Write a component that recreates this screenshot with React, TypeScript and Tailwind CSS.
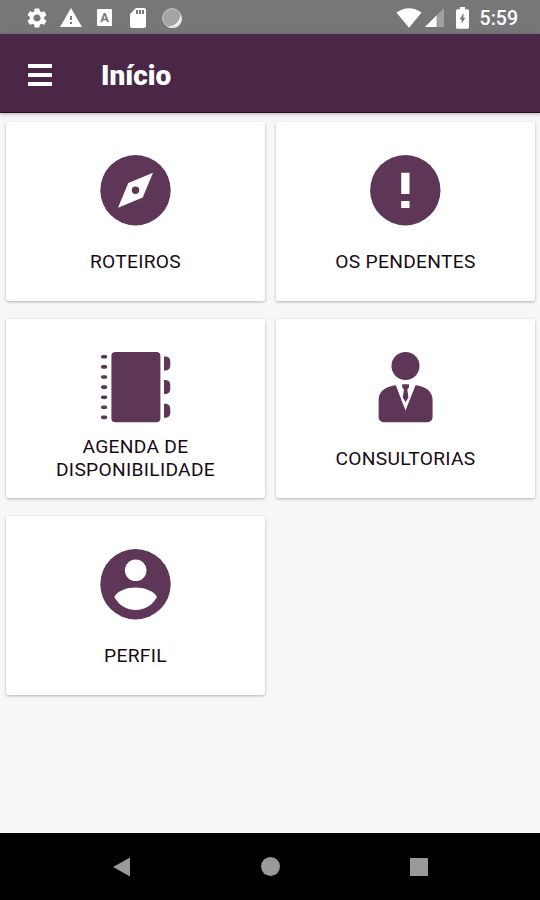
import React from "react";
import { MdSettings, MdWarning, MdSdCard } from "react-icons/md";

function CompassIcon() {
  return (
    <svg className="w-[71px] h-[71px]" viewBox="0 0 71 71" fill="#5d3658">
      <circle cx="35.5" cy="35.2" r="35.2" />
      <path d="M53 17.7L42.7 42.4L18 52.7L28.3 28Z" fill="#fff" />
      <circle cx="35.5" cy="35.2" r="3.7" />
    </svg>
  );
}

function AlertIcon() {
  return (
    <svg className="w-[71px] h-[71px]" viewBox="0 0 71 71" fill="#5d3658">
      <circle cx="35.3" cy="35.2" r="35.2" />
      <path d="M31.2 17.7h8.3v21.3h-8.3zM31.2 46h8.3v7h-8.3z" fill="#fff" />
    </svg>
  );
}

function AgendaIcon() {
  return (
    <svg className="w-[71px] h-[71px]" viewBox="0 0 71 71" fill="#5d3658">
      <rect x="11.4" y="0" width="49" height="70.3" rx="4" />
      {[0, 1, 2, 3, 4, 5, 6].map((i) => (
        <rect key={i} x="1" y={3 + i * 10.1} width="6.2" height="3.6" rx="1.7" />
      ))}
      {[4.4, 28, 51.8].map((y) => (
        <path key={y} transform={`translate(64 ${y})`} d="M0 0h2.4Q6.3 1.2 6.3 5v4Q6.3 13 2.4 14H0Z" />
      ))}
    </svg>
  );
}

function ConsultantIcon() {
  return (
    <svg className="w-[71px] h-[71px]" viewBox="0 0 71 71" fill="#5d3658">
      <circle cx="35.5" cy="14" r="14" />
      <path d="M25.8 33.2L35.5 58.5L45.5 33.2C55 34.4 62.6 38.6 62.6 48v17.3a5 5 0 0 1-5 5H13.6a5 5 0 0 1-5-5V48C8.6 38.6 16.5 34.4 25.8 33.2Z" />
      <path d="M32.2 32.2h6.8v3l-1.7 2.2 1.1 8.2-2.8 4.6-2.8-4.6 1.1-8.2-1.7-2.2z" />
    </svg>
  );
}

function ProfileIcon() {
  return (
    <svg className="w-[71px] h-[71px]" viewBox="0 0 71 71" fill="#5d3658">
      <circle cx="35.5" cy="35.2" r="35.2" />
      <circle cx="35.7" cy="21.3" r="10.8" fill="#fff" />
      <path d="M14.3 48C17.5 41.7 27 38.5 35.5 38.5S53.7 41.7 57 48C52.5 56 45 61 35.6 61S18.8 56 14.3 48Z" fill="#fff" />
    </svg>
  );
}

const items = [
  { label: "ROTEIROS", icon: CompassIcon },
  { label: "OS PENDENTES", icon: AlertIcon },
  { label: "AGENDA DE DISPONIBILIDADE", icon: AgendaIcon },
  { label: "CONSULTORIAS", icon: ConsultantIcon },
  { label: "PERFIL", icon: ProfileIcon },
];

function StatusBar() {
  return (
    <div className="flex h-[34px] items-center justify-between bg-[#777777] pt-px pl-[25px] pr-[22px] text-white">
      <div className="flex items-center">
        <MdSettings className="h-6 w-6" />
        <MdWarning className="ml-[10px] h-6 w-6" />
        <div className="ml-[14px] flex h-[17px] w-[15px] items-center justify-center rounded-[1px] bg-white text-[13px] leading-none font-bold text-[#777777]">
          A
        </div>
        <MdSdCard className="ml-[14px] h-6 w-6" />
        <svg className="ml-[12px] h-5 w-5" viewBox="0 0 20 20">
          <circle cx="10" cy="10" r="9.8" fill="#a4a4a4" />
          <path d="M18.6 6A9.3 9.3 0 0 1 5 18.2Q11 19 14.8 15T18.6 6Z" fill="#fff" />
          <circle cx="10" cy="10" r="9.3" fill="none" stroke="#c4c4c4" />
        </svg>
      </div>
      <div className="flex items-center">
        <svg className="h-5 w-[26px]" viewBox="0 0 26 20" fill="#fff">
          <path d="M0.4 4.6Q13-4.2 25.6 4.6L13 19.8Z" />
        </svg>
        <svg className="ml-[3px] h-[19px] w-[19px]" viewBox="0 0 19 19">
          <path d="M19 0V19H0Z" fill="#a0a0a0" />
          <path d="M11.5 7.5V19H0Z" fill="#fff" />
        </svg>
        <svg className="ml-[12px] h-[22px] w-[13px]" viewBox="0 0 13 22">
          <path d="M4 0h5v2.3h2.5A1.5 1.5 0 0 1 13 3.8v16.4a1.5 1.5 0 0 1-1.5 1.5h-10A1.5 1.5 0 0 1 0 20.2V3.8A1.5 1.5 0 0 1 1.5 2.3H4Z" fill="#fff" />
          <path d="M7.4 6V10.8H9.3L5.7 16.8V12.6H3.7Z" fill="#777" />
        </svg>
        <span className="ml-[11px] pt-[2px] text-[19.5px] leading-none font-medium">5:59</span>
      </div>
    </div>
  );
}

function Header() {
  return (
    <div className="flex h-[79px] items-center border-b border-[#2c0a2b] bg-[#4a2746] pt-[3px] pl-[28px] shadow-[0_1px_4px_rgba(0,0,0,0.3)]">
      <button className="flex w-6 flex-col gap-[5px]" aria-label="Menu">
        <span className="h-[4px] bg-white" />
        <span className="h-[4px] bg-white" />
        <span className="h-[4px] bg-white" />
      </button>
      <h1 className="ml-[49px] pt-[2px] text-[28px] font-black text-white">Início</h1>
    </div>
  );
}

function NavBar() {
  return (
    <div className="flex h-[67px] items-center justify-between bg-black pl-[112px] pr-[112px]">
      <svg className="h-5 w-[19px]" viewBox="0 0 19 20" fill="#999">
        <path d="M1 10L18 0.5V19.5Z" />
      </svg>
      <div className="h-[19px] w-[19px] rounded-full bg-[#999999]" />
      <div className="h-[18px] w-[18px] bg-[#999999]" />
    </div>
  );
}

export function App() {
  return (
    <div className="flex h-[900px] w-[540px] flex-col overflow-hidden bg-[#f7f7f7] font-[Roboto,sans-serif]">
      <StatusBar />
      <Header />
      <div className="flex-1 pt-[9px] pr-[5px] pl-[6px]">
        <div className="grid grid-cols-2 gap-x-[11px] gap-y-[18px]">
          {items.map(({ label, icon: Icon }) => (
            <div
              key={label}
              className="flex h-[179px] flex-col items-center rounded-[2px] bg-white pt-[33px] shadow-[0_1px_3px_rgba(0,0,0,0.28)]"
            >
              <Icon />
              <div className="mt-[12px] flex h-[46px] w-[180px] items-center justify-center text-center text-[19.2px] leading-[23px] font-[450] tracking-[0.3px] text-[#180b17]">
                {label}
              </div>
            </div>
          ))}
        </div>
      </div>
      <NavBar />
    </div>
  );
}
export default App;
